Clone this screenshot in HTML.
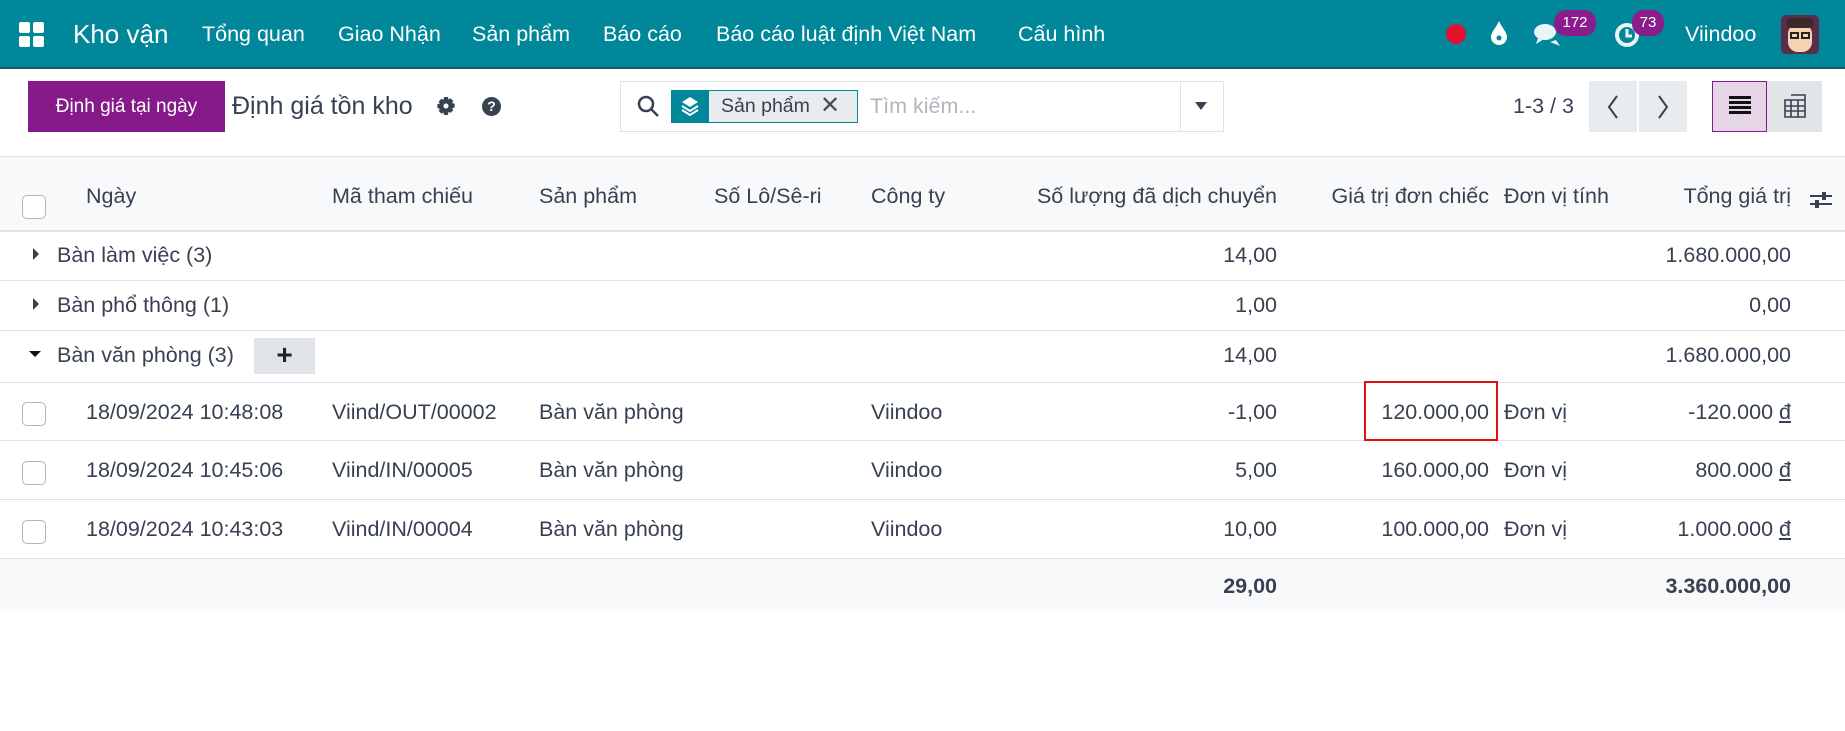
<!DOCTYPE html>
<html><head><meta charset="utf-8">
<style>
*{box-sizing:border-box;margin:0;padding:0}
body{width:1845px;height:731px;overflow:hidden;background:#fff;font-family:"Liberation Sans",sans-serif;color:#374151;position:relative}
.a{position:absolute;white-space:nowrap}
.nav{position:absolute;left:0;top:0;width:1845px;height:69px;background:#00879a;border-bottom:2px solid #0b5d66}
.nav .a{color:#fff;font-size:21.5px;top:22px}
.badge{position:absolute;background:#8a1c8c;color:#fff;font-size:15px;border-radius:12px;height:26px;line-height:26px;text-align:center;top:10px}
.t{font-size:21.5px;color:#374151}
.r{text-align:right}
.hl{position:absolute;left:0;width:1845px;height:1px;background:#dee2e6}
.cb{position:absolute;left:22px;width:24px;height:24px;border:1.5px solid #adb5bd;border-radius:5px;background:#fff}
</style></head><body>
<div class="nav">
  <svg class="a" style="left:19px;top:22px" width="26" height="26" viewBox="0 0 26 26"><rect x="0" y="0" width="11" height="11" rx="2" fill="#fff"/><rect x="14" y="0" width="11" height="11" rx="2" fill="#fff"/><rect x="0" y="14" width="11" height="11" rx="2" fill="#fff"/><rect x="14" y="14" width="11" height="11" rx="2" fill="#fff"/></svg>
  <div class="a" style="left:73px;top:19px;font-size:26px">Kho vận</div>
  <div class="a" style="left:202px">Tổng quan</div>
  <div class="a" style="left:338px">Giao Nhận</div>
  <div class="a" style="left:472px">Sản phẩm</div>
  <div class="a" style="left:603px">Báo cáo</div>
  <div class="a" style="left:716px">Báo cáo luật định Việt Nam</div>
  <div class="a" style="left:1018px">Cấu hình</div>
  <div class="a" style="left:1446px;top:24px;width:20px;height:20px;border-radius:50%;background:#e0102f"></div>
  <svg class="a" style="left:1490px;top:20px" width="18" height="26" viewBox="0 0 18 26"><path d="M9 1 C12 8 17 12 17 17 A8 8 0 0 1 1 17 C1 12 6 8 9 1Z" fill="#fff"/><circle cx="9" cy="18" r="2.5" fill="#00879a"/></svg>
  <svg class="a" style="left:1534px;top:22px" width="30" height="26" viewBox="0 0 30 26"><ellipse cx="11" cy="10" rx="11" ry="8" fill="#e8f4f5"/><path d="M4 16 L2 22 L10 17Z" fill="#e8f4f5"/><path d="M16 20 L26 24 L22 18Z" fill="#e8f4f5"/></svg>
  <div class="badge" style="left:1554px;width:42px">172</div>
  <svg class="a" style="left:1614px;top:22px" width="26" height="26" viewBox="0 0 26 26"><circle cx="13" cy="13" r="10" fill="none" stroke="#e8f4f5" stroke-width="4"/><path d="M13 7 V14 H18" stroke="#e8f4f5" stroke-width="3" fill="none"/></svg>
  <div class="badge" style="left:1632px;width:32px">73</div>
  <div class="a" style="left:1685px">Viindoo</div>
  <div class="a" style="left:1781px;top:15px;width:38px;height:39px;border-radius:5px;background:#5a2e4a;overflow:hidden">
    <div style="position:absolute;left:7px;top:9px;width:24px;height:28px;border-radius:10px;background:#f5d3b0"></div>
    <div style="position:absolute;left:5px;top:3px;width:28px;height:10px;border-radius:6px;background:#3a2a2a"></div>
    <div style="position:absolute;left:9px;top:17px;width:9px;height:7px;border:2px solid #222"></div>
    <div style="position:absolute;left:20px;top:17px;width:9px;height:7px;border:2px solid #222"></div>
  </div>
</div>

<div class="a" style="left:28px;top:81px;width:197px;height:51px;background:#861a8a;color:#fff;font-size:19px;line-height:51px;text-align:center">Định giá tại ngày</div>
<div class="a" style="left:232px;top:92px;font-size:25px;color:#374151">Định giá tồn kho</div>
<svg class="a" style="left:436px;top:96px" width="20" height="20" viewBox="0 0 20 20"><path d="M8 1h4l.5 2.5 2-1.2 2.8 2.8-1.2 2 2.5.5v4l-2.5.5 1.2 2-2.8 2.8-2-1.2L12 19H8l-.5-2.5-2 1.2-2.8-2.8 1.2-2L1.4 12V8l2.5-.5-1.2-2 2.8-2.8 2 1.2Z" fill="#374151"/><circle cx="10" cy="10" r="2.5" fill="#fff"/></svg>
<div class="a" style="left:482px;top:97px;width:19px;height:19px;border-radius:50%;background:#374151;color:#fff;font-size:14px;font-weight:bold;text-align:center;line-height:19px">?</div>

<div class="a" style="left:620px;top:81px;width:604px;height:51px;border:1px solid #dee2e6"></div>
<div class="a" style="left:1180px;top:81px;width:1px;height:51px;background:#dee2e6"></div>
<svg class="a" style="left:636px;top:94px" width="24" height="24" viewBox="0 0 24 24"><circle cx="10" cy="10" r="7" fill="none" stroke="#374151" stroke-width="2.5"/><path d="M15 15 L22 22" stroke="#374151" stroke-width="2.5"/></svg>
<div class="a" style="left:671px;top:90px;width:38px;height:33px;background:#00879a"></div>
<svg class="a" style="left:679px;top:95px" width="22" height="22" viewBox="0 0 22 22"><path d="M11 2 L19 7 L11 12 L3 7Z" fill="#fff"/><path d="M3 11 L11 16 L19 11" stroke="#fff" stroke-width="2" fill="none"/><path d="M3 15 L11 20 L19 15" stroke="#fff" stroke-width="2" fill="none"/></svg>
<div class="a" style="left:709px;top:90px;width:149px;height:33px;background:#e9ecef;border:1px solid #00879a;border-left:none"></div>
<div class="a" style="left:721px;top:95px;font-size:19.5px;color:#374151">Sản phẩm</div>
<div class="a" style="left:820px;top:91px;font-size:24px;color:#495057">✕</div>
<div class="a" style="left:870px;top:94px;font-size:21.5px;color:#b0b5bb">Tìm kiếm...</div>
<svg class="a" style="left:1194px;top:101px" width="14" height="10" viewBox="0 0 14 10"><path d="M1 1 L13 1 L7 9Z" fill="#374151"/></svg>

<div class="a" style="left:1513px;top:94px;font-size:21.5px">1-3 / 3</div>
<div class="a" style="left:1589px;top:81px;width:48px;height:51px;background:#e9ecef"></div>
<div class="a" style="left:1639px;top:81px;width:48px;height:51px;background:#e9ecef"></div>
<svg class="a" style="left:1605px;top:94px" width="16" height="26" viewBox="0 0 16 26"><path d="M12 2 L4 13 L12 24" stroke="#374151" stroke-width="2" fill="none"/></svg>
<svg class="a" style="left:1655px;top:94px" width="16" height="26" viewBox="0 0 16 26"><path d="M4 2 L12 13 L4 24" stroke="#374151" stroke-width="2" fill="none"/></svg>
<div class="a" style="left:1712px;top:81px;width:55px;height:51px;background:#e6d5e6;border:1px solid #861a8a"></div>
<svg class="a" style="left:1729px;top:95px" width="22" height="20" viewBox="0 0 22 20"><rect x="0" y="1" width="22" height="3" fill="#111"/><rect x="0" y="6" width="22" height="3" fill="#111"/><rect x="0" y="11" width="22" height="3" fill="#111"/><rect x="0" y="16" width="22" height="3" fill="#111"/></svg>
<div class="a" style="left:1767px;top:81px;width:55px;height:51px;background:#e2e5e8"></div>
<svg class="a" style="left:1784px;top:94px" width="22" height="24" viewBox="0 0 22 24"><path d="M1 6 H21 V23 H1Z M1 12 H21 M1 17 H21 M7 6 V23 M14 6 V23 M7 1 H21 V6" stroke="#374151" stroke-width="1.6" fill="none"/></svg>

<div class="a" style="left:0;top:156px;width:1845px;height:76px;background:#f8f9fa;border-top:1px solid #dee2e6;border-bottom:2px solid #dee2e6"></div>
<div class="cb" style="top:195px"></div>
<div class="a t" style="left:86px;top:184px">Ngày</div>
<div class="a t" style="left:332px;top:184px">Mã tham chiếu</div>
<div class="a t" style="left:539px;top:184px">Sản phẩm</div>
<div class="a t" style="left:714px;top:184px">Số Lô/Sê-ri</div>
<div class="a t" style="left:871px;top:184px">Công ty</div>
<div class="a t r" style="right:568px;top:184px">Số lượng đã dịch chuyển</div>
<div class="a t r" style="right:356px;top:184px">Giá trị đơn chiếc</div>
<div class="a t" style="left:1504px;top:184px">Đơn vị tính</div>
<div class="a t r" style="right:54px;top:184px">Tổng giá trị</div>
<svg class="a" style="left:1810px;top:189px" width="22" height="22" viewBox="0 0 22 22"><path d="M0 7 H22 M0 15 H22" stroke="#374151" stroke-width="2"/><rect x="12" y="3" width="4" height="8" fill="#374151"/><rect x="5" y="11" width="4" height="8" fill="#374151"/></svg>

<div class="hl" style="top:280px"></div>
<div class="hl" style="top:330px"></div>
<div class="hl" style="top:382px"></div>
<div class="hl" style="top:440px"></div>
<div class="hl" style="top:499px"></div>
<div class="hl" style="top:558px"></div>
<div class="a" style="left:0;top:559px;width:1845px;height:50px;background:#f8f9fa"></div>

<svg class="a" style="left:32px;top:248px" width="8" height="12" viewBox="0 0 8 12"><path d="M1 0 L7 6 L1 12Z" fill="#374151"/></svg>
<div class="a t" style="left:57px;top:243px">Bàn làm việc (3)</div>
<div class="a t r" style="right:568px;top:243px">14,00</div>
<div class="a t r" style="right:54px;top:243px">1.680.000,00</div>

<svg class="a" style="left:32px;top:298px" width="8" height="12" viewBox="0 0 8 12"><path d="M1 0 L7 6 L1 12Z" fill="#374151"/></svg>
<div class="a t" style="left:57px;top:293px">Bàn phổ thông (1)</div>
<div class="a t r" style="right:568px;top:293px">1,00</div>
<div class="a t r" style="right:54px;top:293px">0,00</div>

<svg class="a" style="left:29px;top:350px" width="12" height="8" viewBox="0 0 12 8"><path d="M0 1 L12 1 L6 7Z" fill="#111"/></svg>
<div class="a t" style="left:57px;top:343px">Bàn văn phòng (3)</div>
<div class="a" style="left:254px;top:338px;width:61px;height:36px;background:#e0e3e7;color:#222;font-size:28px;font-weight:bold;text-align:center;line-height:34px">+</div>
<div class="a t r" style="right:568px;top:343px">14,00</div>
<div class="a t r" style="right:54px;top:343px">1.680.000,00</div>

<div class="cb" style="top:402px"></div>
<div class="a t" style="left:86px;top:400px">18/09/2024 10:48:08</div>
<div class="a t" style="left:332px;top:400px">Viind/OUT/00002</div>
<div class="a t" style="left:539px;top:400px">Bàn văn phòng</div>
<div class="a t" style="left:871px;top:400px">Viindoo</div>
<div class="a t r" style="right:568px;top:400px">-1,00</div>
<div class="a t r" style="right:356px;top:400px">120.000,00</div>
<div class="a t" style="left:1504px;top:400px">Đơn vị</div>
<div class="a t r" style="right:54px;top:400px">-120.000 <u>đ</u></div>
<div class="a" style="left:1364px;top:381px;width:134px;height:60px;border:2px solid #e01010"></div>

<div class="cb" style="top:461px"></div>
<div class="a t" style="left:86px;top:458px">18/09/2024 10:45:06</div>
<div class="a t" style="left:332px;top:458px">Viind/IN/00005</div>
<div class="a t" style="left:539px;top:458px">Bàn văn phòng</div>
<div class="a t" style="left:871px;top:458px">Viindoo</div>
<div class="a t r" style="right:568px;top:458px">5,00</div>
<div class="a t r" style="right:356px;top:458px">160.000,00</div>
<div class="a t" style="left:1504px;top:458px">Đơn vị</div>
<div class="a t r" style="right:54px;top:458px">800.000 <u>đ</u></div>

<div class="cb" style="top:520px"></div>
<div class="a t" style="left:86px;top:517px">18/09/2024 10:43:03</div>
<div class="a t" style="left:332px;top:517px">Viind/IN/00004</div>
<div class="a t" style="left:539px;top:517px">Bàn văn phòng</div>
<div class="a t" style="left:871px;top:517px">Viindoo</div>
<div class="a t r" style="right:568px;top:517px">10,00</div>
<div class="a t r" style="right:356px;top:517px">100.000,00</div>
<div class="a t" style="left:1504px;top:517px">Đơn vị</div>
<div class="a t r" style="right:54px;top:517px">1.000.000 <u>đ</u></div>

<div class="a t r" style="right:568px;top:574px;font-weight:bold">29,00</div>
<div class="a t r" style="right:54px;top:574px;font-weight:bold">3.360.000,00</div>
</body></html>
